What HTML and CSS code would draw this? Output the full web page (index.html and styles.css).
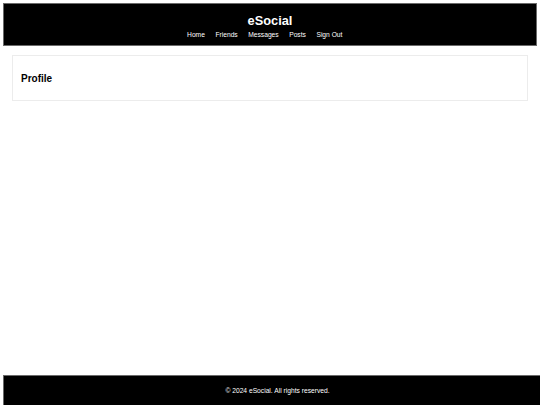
FILE: index.html
```html
<!DOCTYPE html>
<html lang="en">
<head>
<meta charset="utf-8">
<title>eSocial</title>
<link rel="stylesheet" href="styles.css">
</head>
<body>
<header class="site-header">
  <h1 class="brand">eSocial</h1>
  <nav class="nav">
    <a href="#" class="nav-link">Home</a><a href="#" class="nav-link">Friends</a><a href="#" class="nav-link">Messages</a><a href="#" class="nav-link">Posts</a><a href="#" class="nav-link">Sign Out</a>
  </nav>
</header>
<main class="content">
  <section class="card">
    <h2 class="card-title">Profile</h2>
  </section>
</main>
<footer class="site-footer">
  <p class="copy">© 2024 eSocial. All rights reserved.</p>
</footer>
</body>
</html>
```

FILE: styles.css
```css
* { box-sizing: border-box; }
html, body { height: 100%; }
body {
  margin: 0;
  display: flex;
  flex-direction: column;
  font-family: "Liberation Sans", Arial, sans-serif;
  background: #fff;
  color: #000;
}
.site-header {
  margin: 3px 3px 0 3px;
  background: #000;
  border: 1px solid #6a6a6a;
  padding: 9px 0 5.8px;
  text-align: center;
  color: #fff;
}
.brand {
  margin: 0;
  font-size: 12.8px;
  line-height: 15px;
  font-weight: bold;
}
.nav {
  margin-top: 2.2px;
  font-size: 6.7px;
  line-height: 9px;
}
.nav-link {
  color: #fff;
  text-decoration: none;
  margin-right: 10.5px;
}
.content {
  padding: 9px 12px 0;
}
.card {
  border: 1px solid #ececec;
  padding: 8px;
  background: #fff;
}
.card-title {
  margin: 9px 0 7.5px;
  font-size: 10px;
  line-height: 12px;
  font-weight: bold;
}
.site-footer {
  margin-top: auto;
  margin-left: 3px;
  background: #000;
  border-top: 1px solid #6a6a6a;
  border-left: 1px solid #6a6a6a;
  color: #fff;
  text-align: center;
  padding: 9.5px 0 10.5px 11px;
}
.copy {
  margin: 0;
  font-size: 6.7px;
  line-height: 9px;
}
```
